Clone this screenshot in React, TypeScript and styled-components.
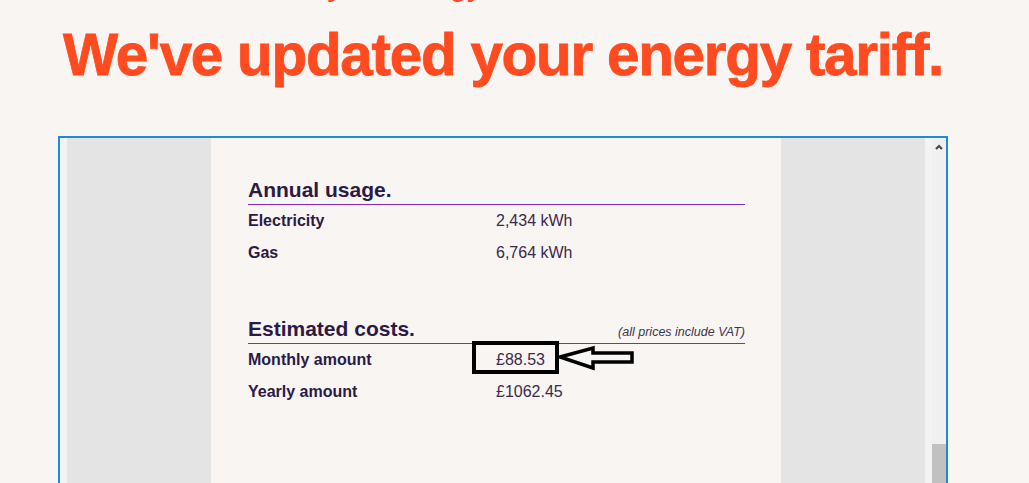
import React from "react";
import styled, { createGlobalStyle } from "styled-components";

const GlobalStyle = createGlobalStyle`
  html, body {
    margin: 0;
    padding: 0;
    background: #f9f5f3;
    overflow: hidden;
  }
  body {
    font-family: "Liberation Sans", Arial, sans-serif;
  }
`;

type Row = { label: string; value: string; highlight?: boolean };

const usage: Row[] = [
  { label: "Electricity", value: "2,434 kWh" },
  { label: "Gas", value: "6,764 kWh" },
];

const costs: Row[] = [
  { label: "Monthly amount", value: "£88.53", highlight: true },
  { label: "Yearly amount", value: "£1062.45" },
];

const App = () => {
  return (
    <Page>
      <GlobalStyle />
      <Kicker>Hello your energy tariff has been renewed</Kicker>
      <Title>We've updated your energy tariff.</Title>

      <Frame>
        <Gutter />
        <Backdrop>
          <Email>
            <SectionHead>
              <h2>Annual usage.</h2>
            </SectionHead>
            {usage.map((row) => (
              <DataRow key={row.label}>
                <Label>{row.label}</Label>
                <Value>{row.value}</Value>
              </DataRow>
            ))}

            <SectionHead $spaced>
              <h2>Estimated costs.</h2>
              <Note>(all prices include VAT)</Note>
            </SectionHead>
            {costs.map((row) => (
              <DataRow key={row.label}>
                <Label>{row.label}</Label>
                <Value>
                  {row.value}
                  {row.highlight && (
                    <>
                      <Marker />
                      <Arrow width="80" height="26" viewBox="0 0 80 26">
                        <polygon
                          points="4,12 37,3 37,8 76,8 76,17 37,17 37,23"
                          fill="#f9f5f3"
                          stroke="#000"
                          strokeWidth="3.5"
                          strokeLinejoin="miter"
                        />
                      </Arrow>
                    </>
                  )}
                </Value>
              </DataRow>
            ))}
          </Email>
        </Backdrop>
        <Gutter />
        <Scrollbar>
          <ScrollUp>
            <svg width="8" height="6" viewBox="0 0 8 6">
              <path d="M1 5 L4 2 L7 5" fill="none" stroke="#4a4a4a" strokeWidth="2.2" />
            </svg>
          </ScrollUp>
          <Thumb />
        </Scrollbar>
      </Frame>
    </Page>
  );
};

export default App;

const Page = styled.div`
  width: 1006px;
  display: flex;
  flex-direction: column;
  align-items: center;
`;

const Kicker = styled.div`
  margin-top: -25px;
  padding-left: 38px;
  font-size: 27px;
  line-height: 24px;
  font-weight: bold;
  color: #ff4b1f;
  white-space: nowrap;
`;

const Title = styled.h1`
  margin: 27px 0 0;
  font-size: 58.5px;
  line-height: 58px;
  font-weight: bold;
  letter-spacing: -1.3px;
  color: #ff4b1f;
  -webkit-text-stroke: 0.8px #ff4b1f;
  white-space: nowrap;
`;

const Frame = styled.div`
  margin-top: 52px;
  width: 886px;
  height: 361px;
  border: 2px solid #1b8dd6;
  display: flex;
  background: #f3f3f3;
`;

const Gutter = styled.div`
  width: 7px;
  flex: none;
`;

const Backdrop = styled.div`
  flex: 1;
  background: #e4e4e4;
  display: flex;
  justify-content: center;
`;

const Email = styled.div`
  width: 570px;
  box-sizing: border-box;
  padding: 40px 36px 0 37px;
  background: #f9f5f3;
  color: #2b1a45;
`;

const SectionHead = styled.div<{ $spaced?: boolean }>`
  display: flex;
  justify-content: space-between;
  align-items: baseline;
  margin-top: ${(p) => (p.$spaced ? "48px" : "0")};
  padding-bottom: 2px;
  border-bottom: 1px solid #7c2cbd;

  h2 {
    margin: 0;
    font-size: 21px;
    line-height: 24px;
    font-weight: bold;
    color: #2b1a45;
  }
`;

const Note = styled.span`
  font-size: 12.5px;
  font-style: italic;
  color: #3d3550;
`;

const DataRow = styled.div`
  display: grid;
  grid-template-columns: 248px 1fr;
  font-size: 16px;
  line-height: 32px;
`;

const Label = styled.div`
  font-weight: bold;
  color: #2b1a45;
`;

const Value = styled.div`
  position: relative;
  color: #3a2a4f;
`;

const Marker = styled.div`
  position: absolute;
  left: -24px;
  top: -3px;
  width: 87px;
  height: 33px;
  box-sizing: border-box;
  border: 4px solid #000;
`;

const Arrow = styled.svg`
  position: absolute;
  left: 60px;
  top: 1px;
`;

const Scrollbar = styled.div`
  width: 14px;
  flex: none;
  background: #f0f0f0;
  display: flex;
  flex-direction: column;
`;

const ScrollUp = styled.div`
  height: 17px;
  display: flex;
  align-items: center;
  justify-content: center;
`;

const Thumb = styled.div`
  margin-top: 289px;
  flex: 1;
  background: #c1c1c1;
`;
